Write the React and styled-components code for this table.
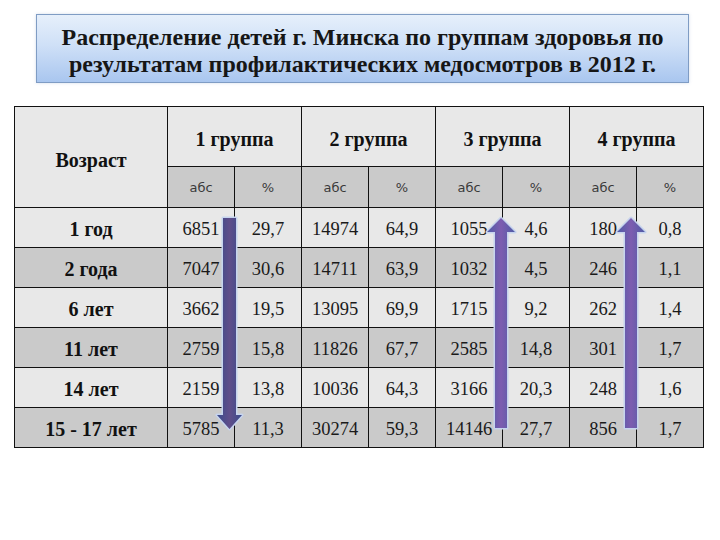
import React from 'react';
import styled, { createGlobalStyle } from 'styled-components';

const GlobalStyle = createGlobalStyle`
  html, body {
    margin: 0;
    padding: 0;
    background: #fff;
  }
  * {
    box-sizing: border-box;
  }
`;

const Page = styled.div`
  width: 720px;
  height: 540px;
  padding: 14px 0 0 14px;
  font-family: "Liberation Serif";
  color: #111;
  overflow: hidden;
`;

const TitleBox = styled.div`
  margin-left: 22px;
  width: 653px;
  height: 69px;
  padding-top: 5px;
  display: flex;
  flex-direction: column;
  align-items: center;
  justify-content: center;
  background: linear-gradient(180deg, #e6effb 0%, #cfe0f7 45%, #a9c6ef 100%);
  border: 1px solid #7f9cc4;
  box-shadow: 0 0 3px rgba(160, 180, 210, 0.45);
`;

const TitleLine = styled.div`
  font-family: "Liberation Serif";
  font-size: 24px;
  font-weight: 700;
  line-height: 27px;
  color: #161616;
  white-space: nowrap;
`;

const TableWrap = styled.div`
  position: relative;
  margin-top: 23px;
  width: 687px;
`;

const Grid = styled.table`
  width: 687px;
  border-collapse: collapse;
  table-layout: fixed;
  border: 1px solid #111;
`;

const Cell = styled.td`
  border: 1px solid #111;
  text-align: center;
  vertical-align: middle;
  padding: 0;
  font-family: "Liberation Serif";
  background: ${p => (p.$dark ? '#cacaca' : '#e8e8e8')};
`;

const HeadCell = styled(Cell)`
  height: 60px;
  font-size: 20px;
  font-weight: 700;
  padding-top: ${p => (p.$tall ? 6 : 5)}px;
`;

const SubCell = styled(Cell)`
  height: 41px;
  font-family: "DejaVu Sans", Verdana, sans-serif;
  font-size: 13px;
  color: #3a3a3a;
`;

const AgeCell = styled(Cell)`
  height: 40px;
  font-size: 20px;
  font-weight: 700;
  padding-top: 4px;
`;

const NumCell = styled(Cell)`
  height: 40px;
  font-size: 18.5px;
  padding-top: 3px;
  color: #1a1a1a;
`;

const ArrowLayer = styled.svg`
  position: absolute;
  left: 0;
  top: 0;
  pointer-events: none;
`;

const rows = [
  ['1 год', '6851', '29,7', '14974', '64,9', '1055', '4,6', '180', '0,8'],
  ['2 года', '7047', '30,6', '14711', '63,9', '1032', '4,5', '246', '1,1'],
  ['6 лет', '3662', '19,5', '13095', '69,9', '1715', '9,2', '262', '1,4'],
  ['11 лет', '2759', '15,8', '11826', '67,7', '2585', '14,8', '301', '1,7'],
  ['14 лет', '2159', '13,8', '10036', '64,3', '3166', '20,3', '248', '1,6'],
  ['15 - 17 лет', '5785', '11,3', '30274', '59,3', '14146', '27,7', '856', '1,7'],
];

const groups = ['1 группа', '2 группа', '3 группа', '4 группа'];

function DownArrow({ x, top, headTop, tip }) {
  const d = `M${x} ${top} H${x + 13} V${headTop} H${x + 19} L${x + 6.5} ${tip} L${x - 6} ${headTop} H${x} Z`;
  return (
    <g>
      <path d={d} fill="none" stroke="#c6d4ee" strokeWidth="3" strokeLinejoin="round" />
      <path d={d} fill="url(#downFill)" />
    </g>
  );
}

function UpArrow({ x, tip, headBase, bottom }) {
  const d = `M${x} ${bottom} V${headBase} H${x - 8} L${x + 6} ${tip} L${x + 20} ${headBase} H${x + 12} V${bottom} Z`;
  return (
    <g>
      <path d={d} fill="none" stroke="#c6d4ee" strokeWidth="3" strokeLinejoin="round" />
      <path d={d} fill="url(#upFill)" />
    </g>
  );
}

export default function App() {
  return (
    <>
      <GlobalStyle />
      <Page>
        <TitleBox>
          <TitleLine>Распределение детей г. Минска по группам здоровья по</TitleLine>
          <TitleLine>результатам профилактических медосмотров в 2012 г.</TitleLine>
        </TitleBox>
        <TableWrap>
          <Grid>
            <colgroup>
              <col style={{ width: 153 }} />
              {Array.from({ length: 8 }).map((_, i) => (
                <col key={i} style={{ width: 67 }} />
              ))}
            </colgroup>
            <thead>
              <tr>
                <HeadCell rowSpan={2} $tall>Возраст</HeadCell>
                {groups.map(g => (
                  <HeadCell key={g} colSpan={2}>{g}</HeadCell>
                ))}
              </tr>
              <tr>
                {groups.map(g => (
                  <React.Fragment key={g}>
                    <SubCell $dark>абс</SubCell>
                    <SubCell $dark>%</SubCell>
                  </React.Fragment>
                ))}
              </tr>
            </thead>
            <tbody>
              {rows.map((r, i) => (
                <tr key={r[0]}>
                  <AgeCell $dark={i % 2 === 1}>{r[0]}</AgeCell>
                  {r.slice(1).map((v, j) => (
                    <NumCell key={j} $dark={i % 2 === 1}>{v}</NumCell>
                  ))}
                </tr>
              ))}
            </tbody>
          </Grid>
          <ArrowLayer width="687" height="345" viewBox="0 0 687 345">
            <defs>
              <linearGradient id="downFill" x1="0" y1="0" x2="1" y2="0">
                <stop offset="0" stopColor="#3a4b8c" />
                <stop offset="0.5" stopColor="#5f4e8a" />
                <stop offset="1" stopColor="#3a4b8c" />
              </linearGradient>
              <linearGradient id="upFill" x1="0" y1="0" x2="1" y2="0">
                <stop offset="0" stopColor="#4f5ca6" />
                <stop offset="0.5" stopColor="#7d5db0" />
                <stop offset="1" stopColor="#4f5ca6" />
              </linearGradient>
            </defs>
            <DownArrow x={209} top={112} headTop={309} tip={323} />
            <UpArrow x={481} tip={112} headBase={126} bottom={322} />
            <UpArrow x={611} tip={112} headBase={126} bottom={322} />
          </ArrowLayer>
        </TableWrap>
      </Page>
    </>
  );
}
